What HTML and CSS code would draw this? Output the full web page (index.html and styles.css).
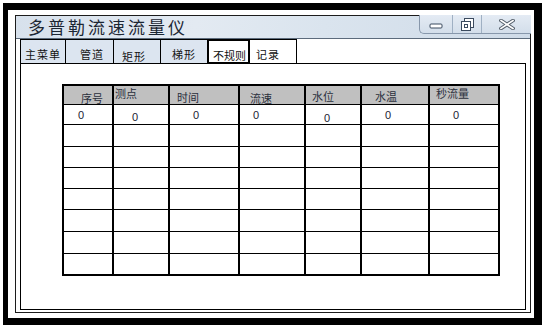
FILE: index.html
```html
<!DOCTYPE html>
<html lang="zh-CN">
<head>
  <meta charset="UTF-8">
  <title>多普勒流速流量仪</title>
  <link rel="stylesheet" href="styles.css">
</head>
<body>
  <div class="screen">
    <div class="window">
      <div class="titlebar">
        <div class="title">多普勒流速流量仪</div>
        <div class="caption-buttons">
          <div class="cap-btn cap-min">
            <svg width="14" height="6" viewBox="0 0 14 6"><rect x="1" y="1" width="12" height="4" rx="1" fill="#fff" stroke="#3b4a5e"/></svg>
          </div>
          <div class="cap-btn cap-restore">
            <svg width="14" height="13" viewBox="0 0 14 13"><rect x="4.5" y="0.5" width="9" height="9" fill="#fff" stroke="#3b4a5e"/><rect x="1.5" y="3.5" width="9" height="9" fill="#fff" stroke="#3b4a5e"/><rect x="4.5" y="6.5" width="3" height="3" fill="#fff" stroke="#3b4a5e"/></svg>
          </div>
          <div class="cap-btn cap-close">
            <svg width="16" height="11" viewBox="0 0 16 11"><path d="M2 1.5 L14 9.5 M14 1.5 L2 9.5" stroke="#56606c" stroke-width="3.6" stroke-linecap="square"/><path d="M2 1.5 L14 9.5 M14 1.5 L2 9.5" stroke="#fff" stroke-width="1.6" stroke-linecap="square"/></svg>
          </div>
        </div>
      </div>

      <div class="tabs">
        <div class="tab tab-main">主菜单</div>
        <div class="tab tab-pipe">管道</div>
        <div class="tab tab-rect">矩形</div>
        <div class="tab tab-trap">梯形</div>
        <div class="tab tab-irr">不规则</div>
        <div class="tab tab-rec">记录</div>
      </div>

      <div class="panel">
        <div class="grid">
          <div class="row head">
            <div>序号</div><div>测点</div><div>时间</div><div>流速</div><div>水位</div><div>水温</div><div>秒流量</div>
          </div>
          <div class="row first">
            <div>0</div><div>0</div><div>0</div><div>0</div><div>0</div><div>0</div><div>0</div>
          </div>
          <div class="row"><div></div><div></div><div></div><div></div><div></div><div></div><div></div></div>
          <div class="row"><div></div><div></div><div></div><div></div><div></div><div></div><div></div></div>
          <div class="row"><div></div><div></div><div></div><div></div><div></div><div></div><div></div></div>
          <div class="row"><div></div><div></div><div></div><div></div><div></div><div></div><div></div></div>
          <div class="row"><div></div><div></div><div></div><div></div><div></div><div></div><div></div></div>
          <div class="row"><div></div><div></div><div></div><div></div><div></div><div></div><div></div></div>
          <div class="row"><div></div><div></div><div></div><div></div><div></div><div></div><div></div></div>
        </div>
      </div>
    </div>
  </div>
</body>
</html>
```

FILE: styles.css
```css
* {
  box-sizing: border-box;
}
body {
  margin: 0;
  background: #fff;
  font-family: "Noto Sans CJK SC", sans-serif;
}
.screen {
  margin: 3px 0 0 3px;
  width: 539px;
  height: 322px;
  border-style: solid;
  border-color: #000;
  border-width: 7px 8px 7px 5px;
  padding: 5px 0 0 7px;
}
.window {
  width: 516px;
  height: 298px;
  border: 1px solid #1c1c1c;
}
.titlebar {
  display: flex;
  justify-content: space-between;
  align-items: flex-start;
  height: 23px;
  border-bottom: 1px solid #5c6b7c;
  background: linear-gradient(100deg, #d7e1ec 0%, #e3eaf2 35%, #dae4ee 60%, #cfdbe8 100%);
}
.title {
  padding: 1px 0 0 12px;
  font-size: 17px;
  line-height: 20px;
  letter-spacing: 3px;
  color: #1c2633;
}
.caption-buttons {
  display: flex;
  height: 19px;
  margin-top: -1px;
  margin-right: -1px;
  border: 1px solid #8797ab;
  border-top: none;
  border-right: none;
  border-bottom-left-radius: 5px;
  background: linear-gradient(#e4ebf4, #d3deea);
}
.cap-btn {
  display: flex;
  align-items: center;
  justify-content: center;
}
.cap-min {
  width: 32px;
  padding-top: 4px;
}
.cap-restore {
  width: 29px;
  border-left: 1px solid #9fb0c3;
}
.cap-close {
  width: 50px;
  border-left: 1px solid #9fb0c3;
}
.tabs {
  display: flex;
  height: 24px;
  margin-left: 4px;
}
.tab {
  height: 24px;
  padding-top: 8px;
  border-top: 1px solid #000;
  border-left: 1px solid #000;
  background: #dce5f0;
  font-size: 11px;
  line-height: 13px;
  letter-spacing: 1px;
  color: #111;
}
.tab-main {
  width: 45px;
  padding-left: 4px;
}
.tab-pipe {
  width: 48px;
  padding-left: 14px;
}
.tab-rect {
  width: 47px;
  padding: 10px 0 0 8px;
}
.tab-trap {
  width: 47px;
  padding-left: 11px;
}
.tab-irr {
  position: relative;
  width: 43px;
  height: 25px;
  padding: 8px 0 0 4px;
  border: 2px solid #000;
  background: #fff;
  letter-spacing: 0;
}
.tab-rec {
  width: 47px;
  padding-left: 6px;
  border-left: none;
  border-right: 1px solid #000;
  background: #fff;
}
.panel {
  width: 506px;
  height: 247px;
  margin-left: 4px;
  border: 1px solid #000;
}
.grid {
  display: grid;
  grid-template-columns: 48px 54px 68px 64px 54px 66px 68px;
  grid-template-rows: 18px 19px 21px 20px 20px 20px 21px 21px 20px;
  gap: 1px 2px;
  width: max-content;
  margin: 20px 0 0 41px;
  padding: 2px;
  background: #000;
}
.row {
  display: contents;
}
.row > div {
  background: #fff;
}
.head > div {
  background: #c0c0c0;
  font-size: 11px;
  line-height: 12px;
  color: #2a2f3c;
  white-space: nowrap;
}
.head > div:nth-child(1) { padding: 6px 0 0 17px; }
.head > div:nth-child(2) { padding: 1px 0 0 1px; }
.head > div:nth-child(3) { padding: 5px 0 0 7px; }
.head > div:nth-child(4) { padding: 6px 0 0 10px; }
.head > div:nth-child(5) { padding: 4px 0 0 6px; }
.head > div:nth-child(6) { padding: 4px 0 0 13px; }
.head > div:nth-child(7) { padding: 1px 0 0 6px; }
.first > div {
  font-family: "Liberation Sans", Arial, sans-serif;
  font-size: 11px;
  line-height: 12px;
  color: #1a2233;
}
.first > div:nth-child(1) { padding: 4px 0 0 14px; }
.first > div:nth-child(2) { padding: 6px 0 0 18px; }
.first > div:nth-child(3) { padding: 4px 0 0 23px; }
.first > div:nth-child(4) { padding: 4px 0 0 13px; }
.first > div:nth-child(5) { padding: 7px 0 0 18px; }
.first > div:nth-child(6) { padding: 4px 0 0 23px; }
.first > div:nth-child(7) { padding: 4px 0 0 23px; }
```
